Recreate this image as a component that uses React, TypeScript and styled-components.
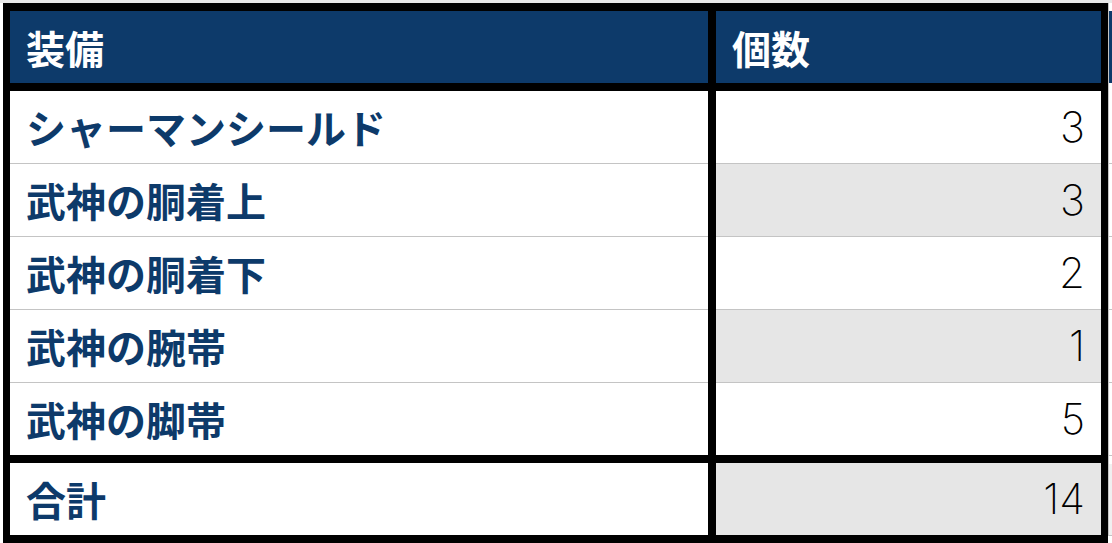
import React from 'react';
import styled, { createGlobalStyle } from 'styled-components';

const navy = '#0d3a6a';
const shade = '#e6e6e6';
const rule = '#c4c4c4';

const GlobalStyle = createGlobalStyle`
  html, body {
    margin: 0;
    padding: 0;
    background: #ffffff;
  }
  body {
    font-family: "Noto Sans CJK JP", "Noto Sans", sans-serif;
  }
`;

const Page = styled.div`
  display: flex;
  align-items: flex-start;
  width: 1112px;
  height: 543px;
  overflow: hidden;
  padding-left: 3px;
  box-sizing: border-box;
  border-top: 3px solid #e8e8e8;
`;

const Sheet = styled.div`
  display: grid;
  grid-template-columns: 698px 385px;
  column-gap: 8px;
  row-gap: 8px;
  background: #000;
  border-style: solid;
  border-color: #000;
  border-width: 8px 7px 8px 7px;
`;

const Body = styled.div`
  display: grid;
  grid-column: 1 / -1;
  grid-template-columns: 698px 385px;
  column-gap: 8px;
`;

const Cell = styled.div<{ $kind: 'head' | 'name' | 'count'; $shaded?: boolean; $ruled?: boolean }>`
  display: flex;
  align-items: center;
  box-sizing: border-box;
  height: ${({ $ruled }) => ($ruled ? '73px' : '72px')};
  border-bottom: ${({ $ruled }) => ($ruled ? `1px solid ${rule}` : 'none')};
  background: ${({ $kind, $shaded }) =>
    $kind === 'head' ? navy : $shaded ? shade : '#ffffff'};
  color: ${({ $kind }) => ($kind === 'head' ? '#ffffff' : $kind === 'name' ? navy : '#000000')};
  justify-content: ${({ $kind }) => ($kind === 'count' ? 'flex-end' : 'flex-start')};
  padding: ${({ $kind }) => ($kind === 'count' ? '0 16px 0 0' : '0 0 0 16px')};
  font-family: ${({ $kind }) =>
    $kind === 'count'
      ? '"Inter", "Lato", "Liberation Sans", sans-serif'
      : '"Noto Sans CJK JP", "Noto Sans", sans-serif'};
  font-weight: ${({ $kind }) => ($kind === 'count' ? 200 : 700)};
  font-size: ${({ $kind }) => ($kind === 'head' ? '39px' : $kind === 'count' ? '42px' : '40px')};
  line-height: 1;
  white-space: nowrap;
`;

const Tail = styled.div`
  display: flex;
  flex-direction: column;
  width: 6px;
  flex-shrink: 0;
`;

const TailPiece = styled.div<{ $h: number; $fill: string; $ruled?: boolean }>`
  height: ${({ $h }) => $h}px;
  background: ${({ $fill }) => $fill};
  box-sizing: border-box;
  border-bottom: ${({ $ruled }) => ($ruled ? `1px solid ${rule}` : 'none')};
  border-left: 1px solid ${rule};
`;

const items = [
  { name: 'シャーマンシールド', count: 3 },
  { name: '武神の胴着上', count: 3 },
  { name: '武神の胴着下', count: 2 },
  { name: '武神の腕帯', count: 1 },
  { name: '武神の脚帯', count: 5 },
];

export default function App() {
  const total = items.reduce((sum, it) => sum + it.count, 0);
  return (
    <>
      <GlobalStyle />
      <Page>
        <Sheet>
          <Cell $kind="head">装備</Cell>
          <Cell $kind="head">個数</Cell>
          <Body>
            {items.map((it, i) => {
              const ruled = i < items.length - 1;
              return (
                <React.Fragment key={it.name}>
                  <Cell $kind="name" $ruled={ruled}>
                    {it.name}
                  </Cell>
                  <Cell $kind="count" $shaded={i % 2 === 1} $ruled={ruled}>
                    {it.count}
                  </Cell>
                </React.Fragment>
              );
            })}
          </Body>
          <Cell $kind="name">合計</Cell>
          <Cell $kind="count" $shaded>
            {total}
          </Cell>
        </Sheet>
        <Tail>
          <TailPiece $h={8} $fill="#ffffff" />
          <TailPiece $h={72} $fill={navy} />
          <TailPiece $h={8} $fill="#ffffff" />
          {items.map((it) => (
            <TailPiece key={it.name} $h={73} $fill="#ffffff" $ruled />
          ))}
          <TailPiece $h={8} $fill="#ffffff" />
          <TailPiece $h={72} $fill="#f0f0f0" $ruled />
        </Tail>
      </Page>
    </>
  );
}
